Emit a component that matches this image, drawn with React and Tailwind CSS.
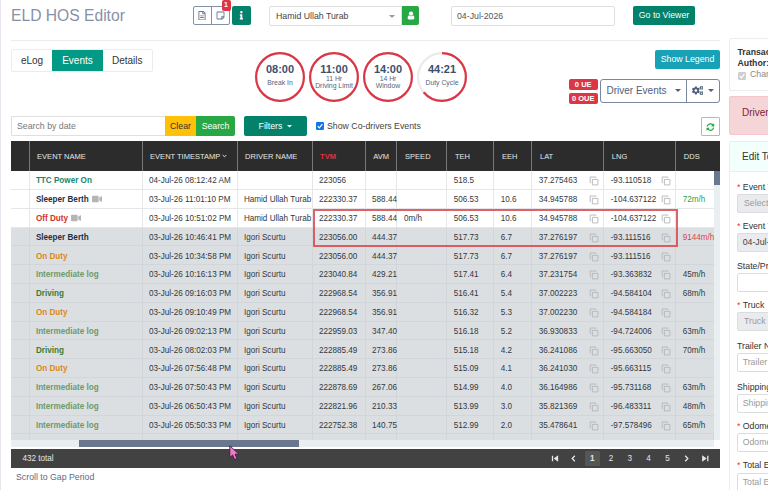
import {
  FaCogs,
  FaInfo,
  FaRegFileAlt,
  FaRegStickyNote,
  FaSyncAlt,
  FaVideo,
} from 'react-icons/fa';

const COLS =
  'grid grid-cols-[18.5px_113px_95px_75px_53.2px_31.8px_49.8px_47px_38.1px_71.9px_72px_1fr]';

const COLORS = {
  'TTC Power On': 'text-[#1c8569]',
  'Sleeper Berth': 'text-[#1f3042]',
  'Off Duty': 'text-[#d02f2f]',
  'On Duty': 'text-[#d98a1c]',
  'Intermediate log': 'text-[#6d9a6d]',
  Driving: 'text-[#3b7d34]',
};

const IG = 'Igori Scurtu';
const HM = 'Hamid Ullah Turab';

// name, timestamp, driver, tvm, avm, speed, teh, eeh, lat, lng, dds
const rows = [
  ['TTC Power On', '04-Jul-26 08:12:42 AM', '', '223056', '', '', '518.5', '', '37.275463', '-93.110518', ''],
  ['Sleeper Berth', '03-Jul-26 11:01:10 PM', HM, '222330.37', '588.44', '', '506.53', '10.6', '34.945788', '-104.637122', '72m/h'],
  ['Off Duty', '03-Jul-26 10:51:02 PM', HM, '222330.37', '588.44', '0m/h', '506.53', '10.6', '34.945788', '-104.637122', ''],
  ['Sleeper Berth', '03-Jul-26 10:46:41 PM', IG, '223056.00', '444.37', '', '517.73', '6.7', '37.276197', '-93.111516', '9144m/h'],
  ['On Duty', '03-Jul-26 10:34:58 PM', IG, '223056.00', '444.37', '', '517.73', '6.7', '37.276197', '-93.111516', ''],
  ['Intermediate log', '03-Jul-26 10:16:13 PM', IG, '223040.84', '429.21', '', '517.41', '6.4', '37.231754', '-93.363832', '45m/h'],
  ['Driving', '03-Jul-26 09:16:03 PM', IG, '222968.54', '356.91', '', '516.41', '5.4', '37.002223', '-94.584104', '68m/h'],
  ['On Duty', '03-Jul-26 09:10:49 PM', IG, '222968.54', '356.91', '', '516.32', '5.3', '37.002230', '-94.584184', ''],
  ['Intermediate log', '03-Jul-26 09:02:13 PM', IG, '222959.03', '347.40', '', '516.18', '5.2', '36.930833', '-94.724006', '63m/h'],
  ['Driving', '03-Jul-26 08:02:03 PM', IG, '222885.49', '273.86', '', '515.18', '4.2', '36.241086', '-95.663050', '70m/h'],
  ['On Duty', '03-Jul-26 07:56:48 PM', IG, '222885.49', '273.86', '', '515.09', '4.1', '36.241030', '-95.663115', ''],
  ['Intermediate log', '03-Jul-26 07:50:43 PM', IG, '222878.69', '267.06', '', '514.99', '4.0', '36.164986', '-95.731168', '63m/h'],
  ['Intermediate log', '03-Jul-26 06:50:43 PM', IG, '222821.96', '210.33', '', '513.99', '3.0', '35.821369', '-96.483311', '48m/h'],
  ['Intermediate log', '03-Jul-26 05:50:33 PM', IG, '222752.38', '140.75', '', '512.99', '2.0', '35.478641', '-97.578496', '65m/h'],
];

const headers = ['', 'EVENT NAME', 'EVENT TIMESTAMP', 'DRIVER NAME', 'TVM', 'AVM', 'SPEED', 'TEH', 'EEH', 'LAT', 'LNG', 'DDS'];

const timers = [
  { time: '08:00', lines: ['Break In'], value: 1 },
  { time: '11:00', lines: ['11 Hr', 'Driving Limit'], value: 1 },
  { time: '14:00', lines: ['14 Hr', 'Window'], value: 1 },
  { time: '44:21', lines: ['Duty Cycle'], value: 0.635 },
];

const fields = [
  { label: 'Event Type', required: true, text: 'Select', disabled: true, indent: true, gap: 'mb-[8.1px]' },
  { label: 'Event Time', required: true, text: '04-Jul-2026', disabled: true, filled: true, gap: 'mb-[8.2px]' },
  { label: 'State/Province', text: '', gap: 'mb-[8.1px]' },
  { label: 'Truck', required: true, text: 'Truck', disabled: true, indent: true, gap: 'mb-[9.6px]' },
  { label: 'Trailer Number', text: 'Trailer', gap: 'mb-[9.6px]' },
  { label: 'Shipping ID', text: 'Shipping ID', gap: 'mb-[7.6px]' },
  { label: 'Odometer', required: true, text: 'Odometer', gap: 'mb-[8.1px]' },
  { label: 'Total Engine Hours', required: true, text: 'Total Engine Hours', gap: 'mb-[8px]' },
];

const Caret = ({ className = '' }) => (
  <svg viewBox="0 0 6 3" className={`h-[3px] w-[6px] fill-current ${className}`}>
    <path d="M0 0h6L3 3z" />
  </svg>
);

const CopyIcon = () => (
  <svg viewBox="0 0 10 10" className="h-[10px] w-[10px] shrink-0 fill-none stroke-[#b3b6ba]" strokeWidth="0.9">
    <path d="M3.4 3.4H8.9V8.9H3.4z" />
    <path d="M1.9 6.8H1.2V1H6.8V1.8" />
  </svg>
);

const UserIcon = () => (
  <svg viewBox="0 0 8 9" className="h-[9px] w-[8px] fill-current">
    <circle cx="4" cy="2.6" r="2.1" />
    <path d="M2 4.2Q.6 4.8.6 7 .6 8.4 2 8.4H6Q7.4 8.4 7.4 7 7.4 4.8 6 4.2 5 5.2 4 5.2T2 4.2z" />
  </svg>
);

const Timer = ({ time, lines, value }) => {
  const r = 23.9;
  const c = 2 * Math.PI * r;
  return (
    <div className="relative h-[50px] w-[50px]">
      <svg viewBox="0 0 50 50" className="absolute inset-0 -rotate-90 fill-none" strokeWidth="2.2">
        <circle cx="25" cy="25" r={r} stroke="#ebebeb" />
        <circle cx="25" cy="25" r={r} stroke="#dc3545" strokeDasharray={`${c * value} ${c}`} />
      </svg>
      <div className="relative flex flex-col items-center pt-[11.5px] text-[#3c4f6d]">
        <b className="text-[11px] leading-[13px]">{time}</b>
        <div className={`text-center text-[6.85px] leading-[7px] whitespace-nowrap text-[#56647c] ${lines.length === 1 ? 'pt-[2.5px]' : '-mt-[0.7px]'}`}>
          {lines.map((line) => (
            <div key={line}>{line}</div>
          ))}
        </div>
      </div>
    </div>
  );
};

const TopBar = () => (
  <div className="flex h-[41px] items-start border-b border-[#ececec] pt-[6px] text-[8.75px]">
    <h1 className="w-[181.5px] text-[15.65px] leading-[20px] text-[#8791a6]">ELD HOS Editor</h1>
    <div className="relative flex h-[19px] w-[37px] rounded-[2px] border border-[#8490a6] text-[#66748e]">
      <span className="flex flex-1 items-center justify-center border-r border-[#8490a6]">
        <FaRegFileAlt className="h-[9.5px] w-[8px]" />
      </span>
      <span className="flex flex-1 items-center justify-center">
        <FaRegStickyNote className="h-[9px] w-[9px]" />
      </span>
      <b className="absolute -top-[7px] -right-[2px] flex h-[11px] w-[9px] items-center justify-center rounded-[2px] bg-[#dc3545] text-[7px] text-white">
        1
      </b>
    </div>
    <button className="ml-[2.5px] flex h-[19px] w-[19px] items-center justify-center rounded-[2px] bg-[#02816b] text-white">
      <FaInfo className="h-[8.5px]" />
    </button>
    <div className="ml-[18px] flex h-[19.5px] w-[133px] items-center justify-between rounded-l-[2px] border border-[#dfdfdf] pt-px pr-[6px] pl-[6px] text-[#444]">
      Hamid Ullah Turab
      <Caret className="text-[#999]" />
    </div>
    <button className="flex h-[19px] w-[17px] items-center justify-center rounded-r-[2px] bg-[#28a745] text-white">
      <UserIcon />
    </button>
    <div className="ml-[32px] flex h-[19.5px] w-[163.5px] items-center rounded-[2px] border border-[#dfdfdf] pt-px pl-[5px] text-[#555]">
      04-Jul-2026
    </div>
    <button className="ml-[18.5px] h-[19px] w-[62px] rounded-[2px] bg-[#02816b] text-white">Go to Viewer</button>
  </div>
);

const Tools = () => (
  <div className="flex h-[75px] items-start pt-[8px]">
    <div className="flex h-[23px] w-[141.5px] overflow-hidden rounded-[2px] border border-[#ececec] text-[10px] text-[#333]">
      <span className="flex w-[40px] items-center justify-center">eLog</span>
      <span className="flex w-[51px] items-center justify-center bg-[#029a84] text-white">Events</span>
      <span className="flex flex-1 items-center justify-center">Details</span>
    </div>
    <div className="mt-[2.5px] ml-[102.5px] flex gap-[4px]">
      {timers.map((t) => (
        <Timer key={t.time} {...t} />
      ))}
    </div>
    <div className="ml-auto flex flex-col items-end">
      <button className="mt-[0.5px] h-[19.5px] w-[65px] rounded-[2px] bg-[#17a2b8] text-[8.75px] text-white">
        Show Legend
      </button>
      <div className="mt-[9.5px] flex">
        <div className="mr-[2.5px] flex w-[28.5px] flex-col gap-[3px] text-center text-[7.55px] leading-[11px] font-bold text-white">
          <span className="rounded-[2px] bg-[#dc3545]">0 UE</span>
          <span className="rounded-[2px] bg-[#dc3545]">0 OUE</span>
        </div>
        <div className="flex h-[24px] w-[120px] rounded-[3px] border border-[#7a879f] text-[10px] text-[#50607c]">
          <span className="flex w-[86px] items-center justify-between border-r border-[#7a879f] pr-[5.5px] pl-[5.5px]">
            Driver Events
            <Caret />
          </span>
          <span className="flex flex-1 items-center justify-between pr-[5.5px] pl-[4.5px]">
            <FaCogs className="h-[11px] w-[11.5px]" />
            <Caret />
          </span>
        </div>
      </div>
    </div>
  </div>
);

const SearchBar = () => (
  <div className="flex h-[25px] items-start text-[8.75px]">
    <div className="flex h-[19.5px] w-[154px] items-center rounded-l-[2px] border border-r-0 border-[#dfdfdf] pt-px pl-[5px] text-[#777]">
      Search by date
    </div>
    <button className="h-[19.5px] w-[31px] bg-[#ffc107] pt-px text-[#333]">Clear</button>
    <button className="h-[19.5px] w-[39px] rounded-r-[2px] bg-[#28a745] pt-px text-white">Search</button>
    <button className="ml-[9px] flex h-[19.5px] w-[63px] items-center justify-center gap-[5px] rounded-[2px] bg-[#02816b] pt-px text-white">
      Filters
      <Caret className="h-[2.5px]! w-[5px]!" />
    </button>
    <label className="ml-[9px] flex h-[22px] items-center gap-[3px] text-[#444]">
      <svg viewBox="0 0 8 8" className="-mt-[2px] h-[8px] w-[8px]">
        <rect width="8" height="8" rx="1.2" fill="#0d75f0" />
        <path d="M1.7 4.1 3.3 5.8 6.4 2.2" fill="none" stroke="white" strokeWidth="1.2" />
      </svg>
      Show Co-drivers Events
    </label>
    <button className="mt-[1px] ml-auto flex h-[19px] w-[19px] items-center justify-center rounded-[1px] border border-[#8fd0a0] text-[#28a745]">
      <FaSyncAlt className="h-[8px]" />
    </button>
  </div>
);

const Row = ({ row, index }) => {
  const shaded = index > 2;
  const line = shaded ? 'border-[#d2d5d9]' : 'border-[#e4e6e9]';
  return (
    <div className={`${COLS} h-[18.8px] border-b ${line} ${shaded ? 'bg-[#dcdfe2]' : 'bg-white'}`}>
      <span className={`border-r ${line}`} />
      {row.map((text, i) => (
        <span
          key={i}
          className={`flex items-center pt-[2.6px] pl-[6.4px] whitespace-nowrap ${i < 10 ? 'border-r' : 'overflow-hidden'} ${line} ${
            i === 0 ? `font-bold ${COLORS[text]}` : ''
          } ${text === '72m/h' ? 'text-[#28a745]' : ''} ${text === '9144m/h' ? 'text-[#e0404c]' : ''}`}
        >
          {text}
          {i === 0 && (index === 1 || index === 2) && (
            <FaVideo className="-mt-[2px] ml-[3px] h-[10px] w-[10px] text-[#b5b5b5]" />
          )}
          {(i === 8 || i === 9) && (
            <span className="mr-[4.5px] ml-auto">
              <CopyIcon />
            </span>
          )}
        </span>
      ))}
    </div>
  );
};

const PageIcon = ({ d, filled }) => (
  <span className="flex w-[15px] items-center justify-center">
    <svg viewBox="0 0 9 9" className={`h-[9px] w-[9px] stroke-current ${filled ? 'fill-current' : 'fill-none'}`} strokeWidth="1.3">
      <path d={d} />
    </svg>
  </span>
);

const EventsTable = () => (
  <div className="relative text-[8.14px] text-[#33383d]">
    <div className={`${COLS} h-[30.3px] bg-[#2c2c2c] text-[7.52px] text-[#e6e6e6]`}>
      {headers.map((h, i) => (
        <span
          key={i}
          className={`flex items-center pl-[7.6px] whitespace-nowrap ${i < 11 ? 'border-r border-[#777]' : ''} ${
            h === 'TVM' ? 'font-bold text-[#e03142]' : ''
          }`}
        >
          {h}
          {i === 2 && (
            <svg viewBox="0 0 5 4" className="ml-[1.5px] h-[4px] w-[5px] fill-none stroke-current">
              <path d="M.7 1 2.5 2.8 4.3 1" />
            </svg>
          )}
        </span>
      ))}
    </div>
    <div className="flex h-[269px]">
      <div className="w-[702.5px] overflow-hidden bg-[#dcdfe2]">
        {rows.map((row, i) => (
          <Row key={i} row={row} index={i} />
        ))}
        <div className={`${COLS} h-[8px]`}>
          {headers.map((h) => (
            <span key={h} className="border-r border-[#d2d5d9]" />
          ))}
        </div>
      </div>
      <div className="flex-1 bg-[#e9eef1]">
        <div className="h-[13.5px] bg-[#69778f]" />
      </div>
    </div>
    <div className="h-[7px] w-[702.5px] bg-[#e9eef1] pl-[68px]">
      <div className="h-[6.5px] w-[220px] bg-[#69778f]" />
    </div>
    <div className="mt-[2px] flex h-[18.5px] items-center bg-[#424242] pr-[7.5px] pl-[11.5px] text-[#e6e6e6]">
      <span className="pt-px">432 total</span>
      <div className="ml-auto flex gap-[3.8px] text-center leading-[15px]">
        <PageIcon d="M2.5 1.8v5.4M7.5 2.6v3.8L4.8 4.5z" filled />
        <PageIcon d="M5.8 1.8 3.2 4.5 5.8 7.2" />
        <b className="w-[15px] rounded-[1px] bg-[#565656]">1</b>
        {[2, 3, 4, 5].map((n) => (
          <span key={n} className="w-[15px]">
            {n}
          </span>
        ))}
        <PageIcon d="M3.2 1.8 5.8 4.5 3.2 7.2" />
        <PageIcon d="M6.8 1.8v5.4M1.8 2.6v3.8L4.5 4.5z" filled />
      </div>
    </div>
    {/* Highlighted jump between two drivers */}
    <div className="absolute top-[68px] left-[301.5px] h-[38px] w-[365.5px] border-2 border-[#d9474c]/85" />
  </div>
);

const SidePanel = () => (
  <aside className="ml-[9px] w-[200px] shrink-0 pt-[38px] text-[8.75px] whitespace-nowrap text-[#333]">
    <div className="h-[53px] rounded-[2px] border border-[#ececec] pt-[7.5px] pl-[7.5px] leading-[11.3px]">
      <b className="block">Transaction:</b>
      <b className="block">Author:</b>
      <div className="flex items-center gap-[4.5px] text-[#888]">
        <svg viewBox="0 0 8 8" className="mt-[2px] h-[8px] w-[8px]">
          <rect width="8" height="8" rx="1.2" fill="#cfcfcf" />
          <path d="M1.7 4.1 3.3 5.8 6.4 2.2" fill="none" stroke="white" strokeWidth="1.2" />
        </svg>
        Change status
      </div>
    </div>
    <div className="mt-[5px] h-[39px] rounded-[2px] border border-[#f5c6cb] bg-[#f6d5d9] pt-[7.5px] pl-[12px] text-[10px] leading-[15px] text-[#7d2530]">
      Driver Events
    </div>
    <div className="mt-[5.5px] h-[360px] rounded-[2px] border border-[#ececec]">
      <div className="flex h-[30px] items-center border-b border-[#ececec] bg-[#f2fffc] pl-[12px] text-[10px]">
        Edit Top Event
      </div>
      <div className="pt-[10px] pl-[7px]">
        {fields.map((f) => (
          <div key={f.label} className={f.gap}>
            <div className="h-[12.2px] leading-[11px]">
              {f.required && <span className="mr-[2.4px] text-red-500">*</span>}
              {f.label}
            </div>
            <div
              className={`flex h-[19.2px] items-center rounded-[2px] border border-[#dcdcdc] ${
                f.indent ? 'pl-[6px]' : 'pl-[4.7px]'
              } ${f.disabled ? 'bg-[#e9ebee]' : 'bg-white'} ${f.filled ? 'text-[#444]' : 'text-[#9a9a9a]'}`}
            >
              {f.text}
            </div>
          </div>
        ))}
      </div>
    </div>
  </aside>
);

export default function App() {
  return (
    <div className="relative flex h-[490px] w-[768px] overflow-hidden bg-white font-['Liberation_Sans',Arial,sans-serif]">
      <main className="w-[720px] shrink-0 border-l border-[#e6e5ee] pl-[10px]">
        <TopBar />
        <Tools />
        <SearchBar />
        <EventsTable />
        <a className="mt-[2.5px] ml-[5px] block text-[8.75px] leading-[14px] text-[#5b6b88]">Scroll to Gap Period</a>
      </main>
      <SidePanel />
      <svg viewBox="0 0 12 16" className="absolute top-[445px] left-[229px] h-[16px] w-[12px]">
        <path d="M.8.8V12.5L3.6 10 5.6 14.6 8 13.5 6 9.2H10z" fill="#f078c8" stroke="#3a2035" strokeWidth="0.9" />
      </svg>
    </div>
  );
}
